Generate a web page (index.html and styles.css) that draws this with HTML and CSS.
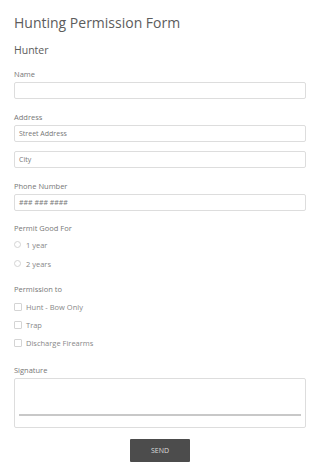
FILE: index.html
```html
<!DOCTYPE html>
<html lang="en">
<head>
<meta charset="UTF-8">
<meta name="viewport" content="width=device-width, initial-scale=1.0">
<title>Hunting Permission Form</title>
<link rel="stylesheet" href="styles.css">
</head>
<body>

<form class="form">
    <h1 class="form-title">Hunting Permission Form</h1>
    <h2 class="section-title">Hunter</h2>

    <div class="field field-name">
        <label class="field-label">Name</label>
        <div class="input"></div>
    </div>

    <div class="field">
        <label class="field-label">Address</label>
        <div class="input">Street Address</div>
        <div class="input input-next">City</div>
    </div>

    <div class="field">
        <label class="field-label">Phone Number</label>
        <div class="input">### ### ####</div>
    </div>

    <div class="field field-permit">
        <label class="field-label">Permit Good For</label>
        <div class="option option-first"><span class="radio"></span>1 year</div>
        <div class="option option-radio"><span class="radio"></span>2 years</div>
    </div>

    <div class="field field-permission">
        <label class="field-label">Permission to</label>
        <div class="option check-first"><span class="check"></span>Hunt - Bow Only</div>
        <div class="option"><span class="check"></span>Trap</div>
        <div class="option"><span class="check"></span>Discharge Firearms</div>
    </div>

    <div class="field field-sign">
        <label class="field-label">Signature</label>
        <div class="signature"><div class="signature-line"></div></div>
    </div>

    <div class="actions">
        <button type="button" class="send">SEND</button>
    </div>
</form>

</body>
</html>
```

FILE: styles.css
```css
body {
    margin: 0;
    padding: 0;
    background-color: #fff;
    font-family: "Open Sans", Arial, sans-serif;
    color: #666;
}
.form {
    padding: 14px 14px 0 14px;
}
.form-title {
    margin: 0;
    font-size: 14px;
    line-height: 18px;
    font-weight: normal;
    color: #5c5c5c;
}
.section-title {
    margin: 11px 0 0 0;
    font-size: 10.5px;
    line-height: 14px;
    font-weight: normal;
    color: #5c5c5c;
}
.field {
    margin-top: 13px;
}
.field-name {
    margin-top: 12px;
}
.field-permit {
    margin-top: 12px;
}
.field-permission {
    margin-top: 15px;
}
.field-sign {
    margin-top: 17px;
}
.field-label {
    display: block;
    font-size: 7.5px;
    line-height: 10px;
    color: #777;
    margin-bottom: 3px;
}
.input {
    box-sizing: border-box;
    height: 17px;
    border: 1px solid #ddd;
    border-radius: 2px;
    padding: 0 4px;
    font-size: 7px;
    line-height: 15px;
    color: #777;
}
.input-next {
    margin-top: 9px;
}
.option {
    display: flex;
    align-items: center;
    gap: 5px;
    height: 11px;
    margin-top: 7px;
    font-size: 7.5px;
    color: #888;
}
.option-first {
    margin-top: 6px;
}
.option-radio {
    margin-top: 8px;
}
.check-first {
    margin-top: 7px;
}
.radio {
    box-sizing: border-box;
    width: 7px;
    height: 7px;
    border: 1px solid #d4d4d4;
    border-radius: 50%;
}
.check {
    box-sizing: border-box;
    width: 8px;
    height: 8px;
    border: 1px solid #d4d4d4;
    border-radius: 1px;
    margin-right: -1px;
}
.signature {
    box-sizing: border-box;
    height: 50px;
    border: 1px solid #ddd;
    border-radius: 2px;
    padding: 35px 4px 0 4px;
}
.signature-line {
    height: 2px;
    background-color: #c8c8c8;
}
.actions {
    display: flex;
    justify-content: center;
    margin-top: 11px;
}
.send {
    width: 60px;
    height: 23px;
    border: none;
    border-radius: 1px;
    background-color: #4c4c4c;
    color: #ddd;
    font-family: "Open Sans", Arial, sans-serif;
    font-size: 7px;
    padding: 0;
    cursor: pointer;
}
```
